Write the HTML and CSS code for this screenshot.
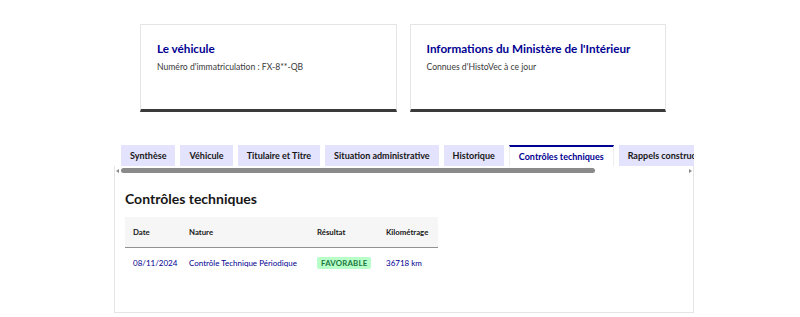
FILE: index.html
```html
<!DOCTYPE html>
<html lang="fr">
	<head>
		<meta charset="UTF-8">
		<meta name="viewport" content="width=device-width, initial-scale=1">
		<title>HistoVec - Contrôles techniques</title>
		<link rel="stylesheet" href="styles.css">
	</head>
	<body>
		<div class="page">
			<div class="cards">
				<div class="card">
					<h2 class="card-title">Le véhicule</h2>
					<p class="card-desc">Numéro d'immatriculation : FX-8**-QB</p>
				</div>
				<div class="card">
					<h2 class="card-title">Informations du Ministère de l'Intérieur</h2>
					<p class="card-desc">Connues d'HistoVec à ce jour</p>
				</div>
			</div>

			<div class="tabs">
				<ul class="tab-list">
					<li class="tab">Synthèse</li>
					<li class="tab">Véhicule</li>
					<li class="tab">Titulaire et Titre</li>
					<li class="tab">Situation administrative</li>
					<li class="tab">Historique</li>
					<li class="tab tab-active">Contrôles techniques</li>
					<li class="tab">Rappels constructeur</li>
				</ul>
				<!-- barre de défilement des onglets -->
				<div class="scrollbar">
					<span class="arrow arrow-left"></span>
					<div class="track"><div class="thumb"></div></div>
					<span class="arrow arrow-right"></span>
				</div>
				<div class="tab-panel">
					<h3 class="panel-title">Contrôles techniques</h3>
					<table class="ct-table">
						<thead>
							<tr>
								<th class="col-date">Date</th>
								<th class="col-nature">Nature</th>
								<th class="col-result">Résultat</th>
								<th class="col-km">Kilométrage</th>
							</tr>
						</thead>
						<tbody>
							<tr>
								<td>08/11/2024</td>
								<td>Contrôle Technique Périodique</td>
								<td><span class="badge-ok">FAVORABLE</span></td>
								<td>36718 km</td>
							</tr>
						</tbody>
					</table>
				</div>
			</div>
		</div>
	</body>
</html>
```

FILE: styles.css
```css
body {
	margin: 0;
	font-family: Lato, "Noto Sans", sans-serif;
	color: #3a3a3a;
	background: #fff;
}
.page {
	width: 580px;
	margin-left: 114px;
	padding-top: 24px;
}

/* cartes du haut */
.cards {
	display: flex;
	gap: 13px;
	padding: 0 28px 0 26px;
}
.card {
	flex: 1;
	box-sizing: border-box;
	height: 88px;
	padding: 14px 16px 0;
	border: 1px solid #e5e5e5;
	border-bottom: 3px solid #3a3a3a;
}
.card-title {
	margin: 0 0 3px;
	font-size: 11.7px;
	font-weight: 700;
	line-height: 18px;
	color: #000091;
	white-space: nowrap;
}
.card-desc {
	margin: 0;
	font-size: 8.6px;
	line-height: 14px;
	color: #3a3a3a;
}

/* onglets */
.tabs {
	margin-top: 33px;
}
.tab-list {
	display: flex;
	gap: 5px;
	margin: 0;
	padding: 0 0 0 7px;
	list-style: none;
	overflow: hidden;
}
.tab {
	flex: none;
	box-sizing: border-box;
	height: 21px;
	padding: 0 9px;
	background: #e3e3fd;
	font-size: 9px;
	font-weight: 700;
	line-height: 21px;
	color: #161616;
	white-space: nowrap;
}
.tab-active {
	background: #fff;
	color: #000091;
	border-top: 2px solid #000091;
	border-left: 1px solid #eee;
	border-right: 1px solid #eee;
	line-height: 19px;
}
.scrollbar {
	display: flex;
	align-items: center;
	height: 9px;
	border-left: 1px solid #e5e5e5;
	border-right: 1px solid #e5e5e5;
}
.arrow {
	width: 0;
	height: 0;
	margin: 0 1px;
	border-top: 2.5px solid transparent;
	border-bottom: 2.5px solid transparent;
}
.arrow-left {
	border-right: 3px solid #8a8a8a;
}
.arrow-right {
	border-left: 3px solid #8a8a8a;
}
.track {
	flex: 1;
	height: 9px;
	display: flex;
	align-items: center;
	padding: 0 1px;
}
.thumb {
	width: 474px;
	height: 5px;
	border-radius: 3px;
	background: #8a8a8a;
}
.tab-panel {
	box-sizing: border-box;
	height: 138px;
	padding: 12px 10px 0;
	border: 1px solid #e5e5e5;
	border-top: none;
}
.panel-title {
	margin: 0 0 6px;
	font-size: 14px;
	font-weight: 700;
	line-height: 24px;
	color: #161616;
}

/* tableau */
.ct-table {
	width: 313px;
	table-layout: fixed;
	border-collapse: collapse;
	font-size: 8px;
}
.ct-table th {
	box-sizing: border-box;
	height: 30px;
	padding: 0 8px;
	background: #f6f6f6;
	border-bottom: 1px solid #929292;
	text-align: left;
	font-size: 7.8px;
	font-weight: 700;
	color: #161616;
}
.ct-table td {
	height: 31px;
	padding: 0 8px;
	color: #000091;
	white-space: nowrap;
}
.col-date { width: 56px; }
.col-nature { width: 128px; }
.col-result { width: 69px; }
.col-km { width: 60px; }
.badge-ok {
	display: inline-block;
	padding: 0 4px;
	border-radius: 2px;
	background: #b8fec9;
	color: #18753c;
	font-size: 7.8px;
	font-weight: 700;
	line-height: 12px;
	letter-spacing: 0.2px;
}
```
